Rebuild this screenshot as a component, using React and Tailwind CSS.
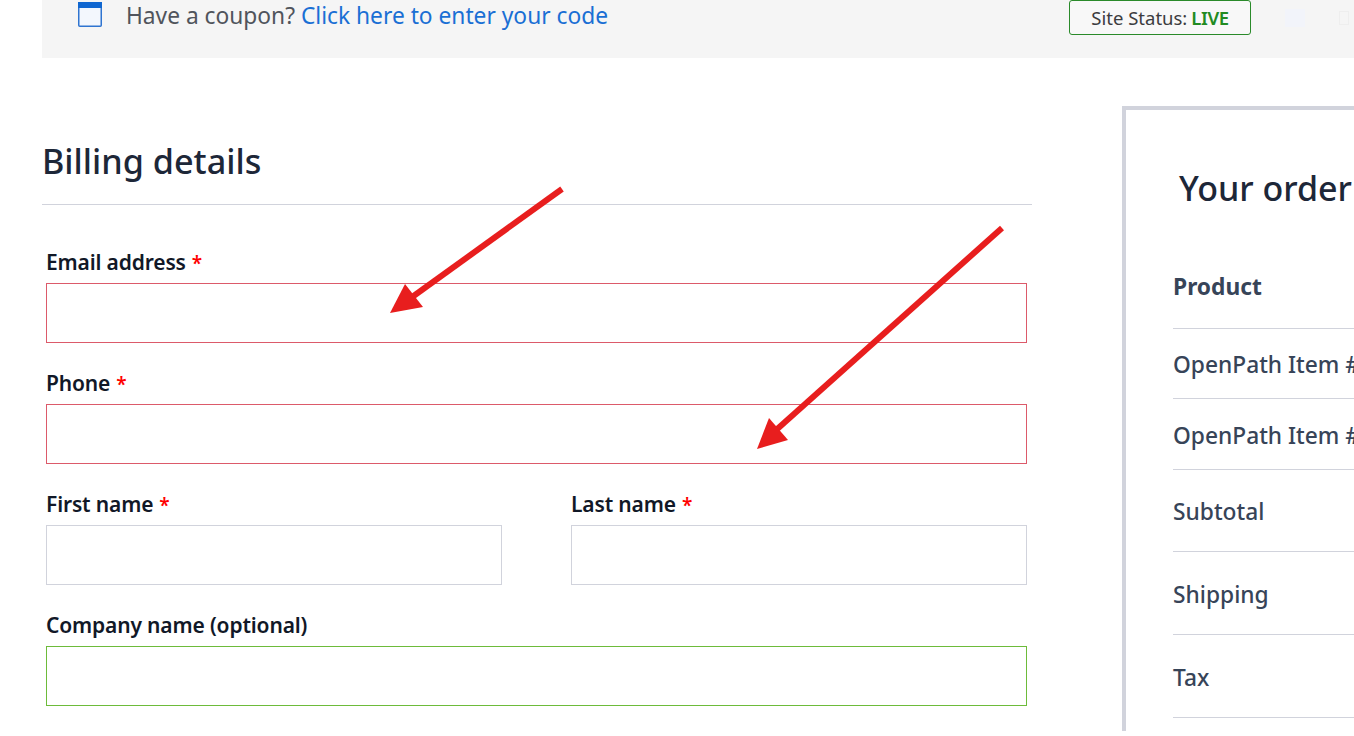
import React from 'react';

const Field = ({ label, required, border }) => (
    <div className="mb-[25px]">
        <label className="block h-[30px] mb-[6px] text-[21px] leading-[30px] font-semibold text-[#111827] tracking-[-0.15px] whitespace-nowrap">
            {label}
            {required && <span className="ml-[6px] text-[19px] text-[#ff0000]">*</span>}
        </label>
        <input className={`block w-full h-[60px] bg-white border ${border}`} />
    </div>
);

const OrderRow = ({ text, height, bold }) => (
    <div className={`flex items-center border-b border-[#d1d3dc] whitespace-nowrap text-[#374458] text-[22.75px] ${height} ${bold ? 'font-bold' : 'pt-[4px] font-medium'}`}>
        {text}
    </div>
);

const Arrow = () => (
    <svg className="absolute left-0 top-0 pointer-events-none" width="1354" height="736" fill="#e81e1e">
        <line x1="562" y1="189" x2="408" y2="300" stroke="#e81e1e" strokeWidth="6" />
        <polygon points="390,313 405,284 423,307" />
        <line x1="1002" y1="228" x2="775" y2="431" stroke="#e81e1e" strokeWidth="6" />
        <polygon points="757,449 769,418 788,440" />
    </svg>
);

export default function App() {
    return (
        <div className="relative w-[1354px] h-[736px] overflow-hidden bg-white pl-[42px] font-['Noto_Sans',sans-serif]">
            <div className="relative h-[58px] bg-[#f5f5f5] pl-[36px] flex items-start">
                <svg className="mt-[2px] shrink-0" width="24" height="25" viewBox="0 0 24 25">
                    <rect x="0.75" y="0.75" width="22.5" height="23.5" rx="1" fill="#f3f7fd" stroke="#2f74d0" strokeWidth="1.5" />
                    <rect x="0" y="0" width="24" height="6" fill="#0f66d0" />
                </svg>
                <p className="ml-[24px] leading-[32px] text-[22.75px] text-[#50545c] whitespace-nowrap">
                    Have a coupon? <a className="text-[#1a6fd4]">Click here to enter your code</a>
                </p>
                <div className="absolute left-[1027px] top-0 w-[182px] h-[35px] flex items-center justify-center rounded-[3px] border border-[#2a8a2a] bg-[#f8f8f8] text-[18.5px] text-[#3c3c40] whitespace-nowrap">
                    Site Status:<span className="ml-[4px] font-semibold tracking-[-0.4px] text-[#228b22]">LIVE</span>
                </div>
                <div className="absolute left-[1243px] top-[9px] w-[20px] h-[18px] bg-[#f2f4fa]" />
                <div className="absolute left-[1297px] top-[11px] w-[10px] h-[14px] border border-[#eeeeee]" />
            </div>
            <div className="flex">
                <div className="w-[990px] shrink-0 pt-[78px]">
                    <h2 className="h-[69px] leading-[50px] border-b border-[#d1d3dc] text-[34.2px] font-medium text-[#1d2738] whitespace-nowrap">Billing details</h2>
                    <div className="w-[985px] pl-[4px] pt-[42px]">
                        <Field label="Email address" required border="border-[#dc5a6a]" />
                        <Field label="Phone" required border="border-[#dc5a6a]" />
                        <div className="grid grid-cols-2 gap-x-[69px]">
                            <Field label="First name" required border="border-[#d1d3dc]" />
                            <Field label="Last name" required border="border-[#d1d3dc]" />
                        </div>
                        <Field label="Company name (optional)" border="border-[#6dbb3a]" />
                    </div>
                </div>
                <div className="ml-[90px] mt-[48px] w-[400px] shrink-0 border-l-4 border-t-4 border-[#d1d3dc] pl-[47px] pt-[53px]">
                    <h3 className="h-[50px] leading-[50px] pl-[6px] text-[34px] font-medium text-[#1d2738] whitespace-nowrap">Your order</h3>
                    <div className="mt-[34px]">
                        <OrderRow text="Product" height="h-[82px]" bold />
                        <OrderRow text="OpenPath Item #" height="h-[70px]" />
                        <OrderRow text="OpenPath Item #" height="h-[71px]" />
                        <OrderRow text="Subtotal" height="h-[82px]" />
                        <OrderRow text="Shipping" height="h-[83px]" />
                        <OrderRow text="Tax" height="h-[83px]" />
                    </div>
                </div>
            </div>
            <Arrow />
        </div>
    );
}
